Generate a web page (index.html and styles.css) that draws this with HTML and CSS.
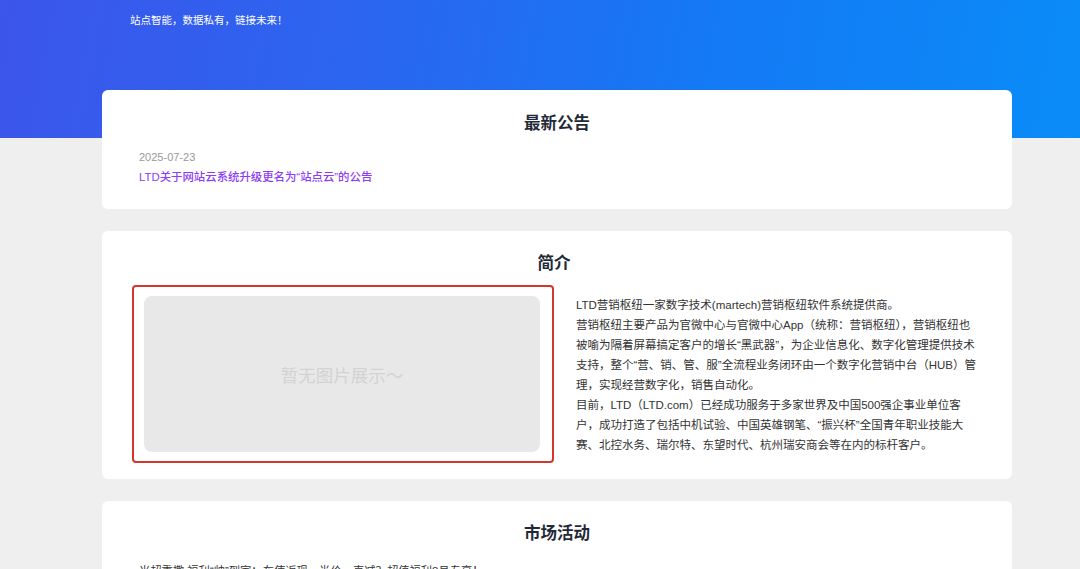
FILE: index.html
```html
<!DOCTYPE html>
<html lang="zh-CN">
<head>
<meta charset="utf-8">
<title>站点云</title>
<link rel="stylesheet" href="styles.css">
</head>
<body>
<header class="hero">
  <p class="tagline">站点智能，数据私有，链接未来！</p>
</header>
<main class="main">
  <section class="card notice">
    <h2 class="card-title">最新公告</h2>
    <div class="notice-date">2025-07-23</div>
    <a class="notice-link" href="#">LTD关于网站云系统升级更名为“站点云”的公告</a>
  </section>
  <section class="card intro">
    <h2 class="card-title">简介</h2>
    <div class="intro-body">
      <div class="pic-frame">
        <div class="pic-empty">暂无图片展示～</div>
      </div>
      <div class="intro-text">
        <p>LTD营销枢纽一家数字技术(martech)营销枢纽软件系统提供商。</p>
        <p>营销枢纽主要产品为官微中心与官微中心App（统称：营销枢纽），营销枢纽也<br>被喻为隔着屏幕搞定客户的增长“黑武器”，为企业信息化、数字化管理提供技术<br>支持，整个“营、销、管、服”全流程业务闭环由一个数字化营销中台（HUB）管<br>理，实现经营数字化，销售自动化。</p>
        <p>目前，LTD（LTD.com）已经成功服务于多家世界及中国500强企事业单位客<br>户，成功打造了包括中机试验、中国英雄钢笔、“振兴杯”全国青年职业技能大<br>赛、北控水务、瑞尔特、东望时代、杭州瑞安商会等在内的标杆客户。</p>
      </div>
    </div>
  </section>
  <section class="card market">
    <h2 class="card-title">市场活动</h2>
    <p class="market-text">米超重撒 福利“帅”到家：车使返现，半价，直减？超值福利8月专享！</p>
  </section>
</main>
</body>
</html>
```

FILE: styles.css
```css
* { box-sizing: border-box; }
html, body {
  margin: 0;
  padding: 0;
}
body {
  background: #efefef;
  font-family: "Liberation Sans", "Noto Sans CJK SC", sans-serif;
  color: #333;
  overflow: hidden;
}
.hero {
  height: 138px;
  background: linear-gradient(100deg, #3c55eb 0%, #2a66f0 35%, #1479f5 65%, #0a8cf8 100%);
  padding: 12px 0 0 130px;
}
.tagline {
  margin: 0;
  color: #fff;
  font-size: 10.5px;
  line-height: 17px;
}
.main {
  width: 910px;
  margin: -48px 0 0 102px;
  position: relative;
  display: flex;
  flex-direction: column;
  gap: 22px;
}
.card {
  background: #fff;
  border-radius: 6px;
}
.card-title {
  margin: 0;
  text-align: center;
  font-size: 16.5px;
  line-height: 24px;
  font-weight: 600;
  color: #1f2937;
}
.notice {
  padding: 21px 37px 23px;
  display: flex;
  flex-direction: column;
}
.notice-date {
  margin-top: 14px;
  font-size: 11px;
  line-height: 16px;
  color: #999;
}
.notice-link {
  margin-top: 3px;
  font-size: 11.4px;
  line-height: 18px;
  color: #8b3cf6;
  text-decoration: none;
  font-weight: 500;
}
.intro {
  padding: 20px 36px 16px 30px;
}
.intro-body {
  margin-top: 10px;
  display: flex;
  align-items: center;
  gap: 22px;
}
.pic-frame {
  flex: 0 0 422px;
  height: 178px;
  border: 2px solid #d2362c;
  border-radius: 4px;
  padding: 9px 12px 9px 10px;
}
.pic-empty {
  height: 100%;
  background: #e8e8e8;
  border-radius: 8px;
  display: flex;
  align-items: center;
  justify-content: center;
  color: #d3d3d3;
  font-size: 17.5px;
}
.intro-text {
  flex: 1;
  font-size: 11.5px;
  line-height: 20px;
  color: #333;
  white-space: nowrap;
  padding-top: 1px;
}
.intro-text p { margin: 0; }
.market {
  padding: 20px 37px 20px;
  height: 200px;
}
.market-text {
  margin: 17px 0 0;
  font-size: 11.3px;
  line-height: 18px;
  color: #333;
}
```
